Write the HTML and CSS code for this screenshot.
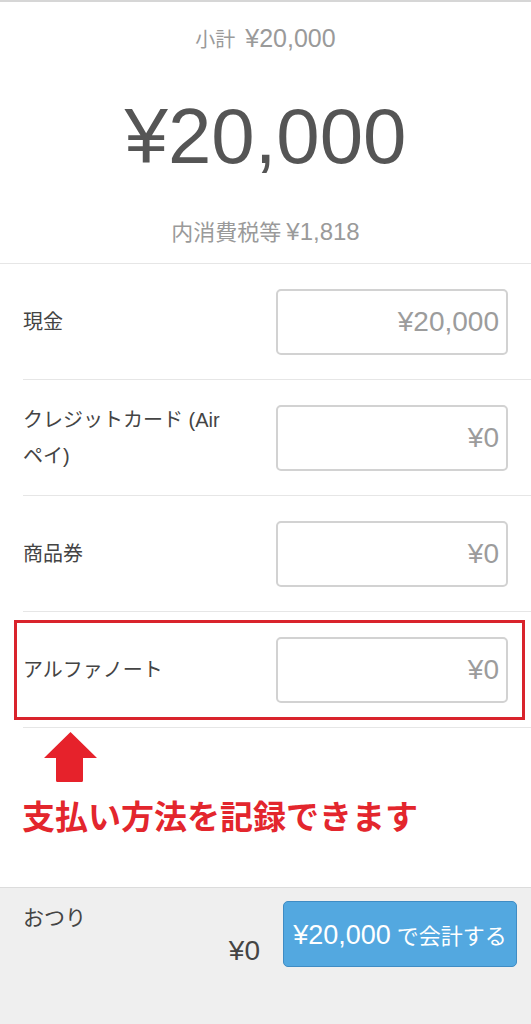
FILE: index.html
```html
<!DOCTYPE html>
<html lang="ja">
<head>
<meta charset="utf-8">
<title>会計</title>
<link rel="stylesheet" href="styles.css">
</head>
<body>
<div class="screen">
  <header class="summary">
    <div class="subtotal"><span class="jp">小計</span> <span class="num">¥20,000</span></div>
    <div class="total">¥20,000</div>
    <div class="tax"><span class="jp">内消費税等</span> <span class="num">¥1,818</span></div>
  </header>

  <ul class="methods">
    <li class="method">
      <span class="method-label">現金</span>
      <input class="method-input" type="text" value="¥20,000" readonly>
    </li>
    <li class="method">
      <span class="method-label">クレジットカード (Airペイ)</span>
      <input class="method-input" type="text" value="¥0" readonly>
    </li>
    <li class="method">
      <span class="method-label">商品券</span>
      <input class="method-input" type="text" value="¥0" readonly>
    </li>
    <li class="method method-highlighted">
      <span class="method-label">アルファノート</span>
      <input class="method-input" type="text" value="¥0" readonly>
      <span class="highlight-frame"></span>
    </li>
  </ul>

  <section class="note">
    <svg class="note-arrow" width="53" height="50" viewBox="0 0 53 50" aria-hidden="true">
      <path d="M26.5 0 L53 26 L39 26 L39 48.5 Q39 50 37.5 50 L13.5 50 Q12 50 12 48.5 L12 26 L0 26 Z" fill="#e6222b"/>
    </svg>
    <p class="note-text">支払い方法を記録できます</p>
  </section>

  <footer class="checkout">
    <div class="change">
      <span class="change-label">おつり</span>
      <span class="change-amount">¥0</span>
    </div>
    <button class="pay-button" type="button"><span class="pay-num">¥20,000</span><span class="pay-jp"> で会計する</span></button>
  </footer>
</div>
</body>
</html>
```

FILE: styles.css
```css
* {
  box-sizing: border-box;
}

html, body {
  margin: 0;
  padding: 0;
  background: #ffffff;
}

body {
  font-family: "Liberation Sans", "Noto Sans CJK JP", sans-serif;
  color: #444444;
}

.screen {
  width: 531px;
  height: 1024px;
  display: flex;
  flex-direction: column;
  border-top: 2px solid #d6d6d6;
  overflow: hidden;
}

/* ---------- summary ---------- */
.summary {
  height: 261px;
  display: flex;
  flex-direction: column;
  align-items: center;
  padding-top: 20px;
}

.subtotal,
.tax {
  color: #9a9a9a;
  height: 32px;
  line-height: 32px;
  white-space: nowrap;
}

.subtotal {
  font-size: 25px;
}

.subtotal .jp {
  font-size: 20px;
  margin-right: 3px;
}

.subtotal .num {
  font-size: 25px;
}

.tax {
  font-size: 18px;
}

.tax .jp {
  font-size: 22px;
}

.tax .num {
  font-size: 24px;
}

.total {
  margin-top: 43px;
  font-size: 78px;
  line-height: 78px;
  color: #555555;
}

.tax {
  margin-top: 41px;
}

/* ---------- payment methods ---------- */
.methods {
  list-style: none;
  margin: 0;
  padding: 0;
  border-top: 1px solid #e6e6e6;
}

.method {
  position: relative;
  height: 116px;
  display: flex;
  align-items: center;
  justify-content: space-between;
  margin-left: 23px;
  padding-right: 23px;
  border-bottom: 1px solid #e6e6e6;
}

.method-label {
  width: 212px;
  font-size: 20px;
  line-height: 36px;
  color: #444444;
}

.method-input {
  width: 232px;
  height: 66px;
  border: 2px solid #d2d2d2;
  border-radius: 5px;
  background: #ffffff;
  padding: 0 7px 0 10px;
  text-align: right;
  font-family: "Liberation Sans", "Noto Sans CJK JP", sans-serif;
  font-size: 28px;
  color: #9c9c9c;
  outline: none;
}

.highlight-frame {
  position: absolute;
  top: 8px;
  bottom: 7px;
  left: -9px;
  right: 6px;
  border: 3px solid #d9232c;
  pointer-events: none;
}

/* ---------- annotation ---------- */
.note {
  flex: 1;
  padding: 4px 0 0 22px;
}

.note-arrow {
  display: block;
  margin-left: 22px;
}

.note-text {
  margin: 13px 0 0;
  font-family: "Noto Sans CJK JP", sans-serif;
  font-weight: 700;
  font-size: 33px;
  line-height: 40px;
  color: #e3262d;
  white-space: nowrap;
}

/* ---------- checkout footer ---------- */
.checkout {
  height: 137px;
  display: flex;
  gap: 23px;
  padding: 13px 14px 0 23px;
  background: #efefef;
  border-top: 1px solid #dcdcdc;
}

.change {
  flex: 1;
  display: flex;
  flex-direction: column;
}

.change-label {
  font-family: "Noto Sans CJK JP", sans-serif;
  font-size: 21px;
  line-height: 30px;
  color: #444444;
}

.change-amount {
  text-align: right;
  font-size: 28px;
  line-height: 32px;
  margin-top: 4px;
  color: #444444;
}

.pay-button {
  width: 234px;
  height: 66px;
  border: 1px solid #3f8cc4;
  border-radius: 5px;
  background: #53a8e0;
  color: #ffffff;
  padding: 0;
  font-family: "Liberation Sans", "Noto Sans CJK JP", sans-serif;
  white-space: nowrap;
  cursor: pointer;
}

.pay-num {
  font-size: 27px;
}

.pay-jp {
  font-size: 22px;
}
```
